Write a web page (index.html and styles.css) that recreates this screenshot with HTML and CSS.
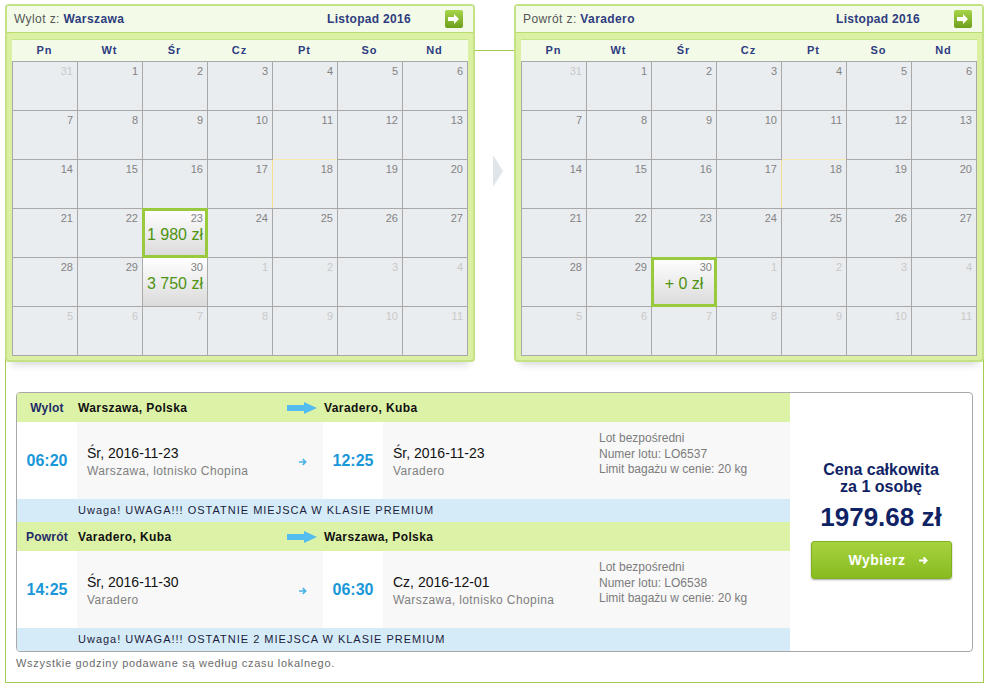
FILE: index.html
```html
<!DOCTYPE html>
<html>
<head>
    <meta charset="utf-8">
    <title>Wybór lotu</title>
    <link rel="stylesheet" href="styles.css">
</head>
<body>
    <div class="page">
        <div class="search">
            <div class="calendars">
                <div class="cal">
                    <div class="cal-head">
                        <div class="cal-title">Wylot z: <b>Warszawa</b></div>
                        <div class="cal-month">Listopad 2016</div>
                        <button class="cal-next"><svg width="12" height="10" viewBox="0 0 12 10"><polygon points="0,3 6,3 6,0 11,5 6,10 6,7 0,7" fill="#fff"/></svg></button>
                    </div>
                    <div class="cal-body">
                        <div class="weekdays">
                            <div>Pn</div><div>Wt</div><div>Śr</div><div>Cz</div><div>Pt</div><div>So</div><div>Nd</div>
                        </div>
                        <div class="days" id="outboundDays"></div>
                    </div>
                </div>

                <div class="cal-sep"><span class="chevron"></span></div>

                <div class="cal">
                    <div class="cal-head">
                        <div class="cal-title">Powrót z: <b>Varadero</b></div>
                        <div class="cal-month">Listopad 2016</div>
                        <button class="cal-next"><svg width="12" height="10" viewBox="0 0 12 10"><polygon points="0,3 6,3 6,0 11,5 6,10 6,7 0,7" fill="#fff"/></svg></button>
                    </div>
                    <div class="cal-body">
                        <div class="weekdays">
                            <div>Pn</div><div>Wt</div><div>Śr</div><div>Cz</div><div>Pt</div><div>So</div><div>Nd</div>
                        </div>
                        <div class="days" id="returnDays"></div>
                    </div>
                </div>
            </div>

            <div class="offer">
                <div class="legs">
                    <!-- outbound -->
                    <div class="leg-label">Wylot</div>
                    <div class="leg-from">
                        <span>Warszawa, Polska</span>
                        <svg class="big-arrow" width="30" height="12" viewBox="0 0 30 12"><polygon points="0,3 17,3 17,0 30,6 17,12 17,9 0,9"/></svg>
                    </div>
                    <div class="leg-to">Varadero, Kuba</div>

                    <div class="time">06:20</div>
                    <div class="where">
                        <div>
                            <div class="date">Śr, 2016-11-23</div>
                            <div class="place">Warszawa, lotnisko Chopina</div>
                        </div>
                        <svg class="small-arrow" width="8" height="8" viewBox="0 0 8 8"><path d="M0 4h6.5M3.8 1.2l2.8 2.8-2.8 2.8"/></svg>
                    </div>
                    <div class="time">12:25</div>
                    <div class="where arrival">
                        <div class="arrival-when">
                            <div class="date">Śr, 2016-11-23</div>
                            <div class="place">Varadero</div>
                        </div>
                        <div class="info">
                            Lot bezpośredni<br>
                            Numer lotu: LO6537<br>
                            Limit bagażu w cenie: 20 kg
                        </div>
                    </div>
                    <div class="notice">Uwaga! UWAGA!!! OSTATNIE MIEJSCA W KLASIE PREMIUM</div>

                    <!-- return -->
                    <div class="leg-label">Powrót</div>
                    <div class="leg-from">
                        <span>Varadero, Kuba</span>
                        <svg class="big-arrow" width="30" height="12" viewBox="0 0 30 12"><polygon points="0,3 17,3 17,0 30,6 17,12 17,9 0,9"/></svg>
                    </div>
                    <div class="leg-to">Warszawa, Polska</div>

                    <div class="time">14:25</div>
                    <div class="where">
                        <div>
                            <div class="date">Śr, 2016-11-30</div>
                            <div class="place">Varadero</div>
                        </div>
                        <svg class="small-arrow" width="8" height="8" viewBox="0 0 8 8"><path d="M0 4h6.5M3.8 1.2l2.8 2.8-2.8 2.8"/></svg>
                    </div>
                    <div class="time">06:30</div>
                    <div class="where arrival">
                        <div class="arrival-when">
                            <div class="date">Cz, 2016-12-01</div>
                            <div class="place">Warszawa, lotnisko Chopina</div>
                        </div>
                        <div class="info">
                            Lot bezpośredni<br>
                            Numer lotu: LO6538<br>
                            Limit bagażu w cenie: 20 kg
                        </div>
                    </div>
                    <div class="notice">Uwaga! UWAGA!!! OSTATNIE 2 MIEJSCA W KLASIE PREMIUM</div>
                </div>

                <div class="total">
                    <div class="total-label">Cena całkowita<br>za 1 osobę</div>
                    <div class="total-price">1979.68 zł</div>
                    <button class="choose-btn">Wybierz <svg width="10" height="9" viewBox="0 0 10 9"><path d="M0 4.5h7.5M4.5 1.3l3.2 3.2-3.2 3.2"/></svg></button>
                </div>
            </div>

            <div class="footnote">Wszystkie godziny podawane są według czasu lokalnego.</div>
        </div>
    </div>

    <script>
        // November 2016 grid: starts on Monday 31 Oct, ends on Sunday 11 Dec
        function buildMonth(id, prices, selected) {
            const days = [31];
            for (let d = 1; d <= 30; d++) days.push(d);
            for (let d = 1; d <= 11; d++) days.push(d);

            document.getElementById(id).innerHTML = days.map((day, i) => {
                const inMonth = i > 0 && i <= 30;
                const price = inMonth ? prices[day] : null;
                let cls = 'day';
                if (!inMonth) cls += ' other';
                if (inMonth && day === 18) cls += ' today';
                if (price) cls += ' has-price';
                if (inMonth && day === selected) cls += ' selected';
                return `<div class="${cls}"><span class="num">${day}</span>${price ? `<span class="price">${price}</span>` : ''}</div>`;
            }).join('');
        }

        buildMonth('outboundDays', { 23: '1 980 zł', 30: '3 750 zł' }, 23);
        buildMonth('returnDays', { 30: '+ 0 zł' }, 30);
    </script>
</body>
</html>
```

FILE: styles.css
```css
body { margin: 0; font-family: "Liberation Sans", Arial, sans-serif; color: #222; background: #fff; }
button { font-family: inherit; cursor: pointer; }

.page { padding: 50px 5px 0; }
.search { border: 1px solid #a3cd4a; padding: 0 10px 12px; }

/* calendars */
.calendars { display: flex; margin: -47px -11px 0; }
.cal { width: 470px; box-sizing: border-box; border: 2px solid #c3e284; border-radius: 4px; background: #dcf0a4; box-shadow: 0 8px 8px -6px rgba(0,0,0,0.18); }
.cal-head { display: flex; align-items: center; height: 26px; padding: 0 10px 0 7px; background: #f3fbe8; border-bottom: 1px solid #b9dc70; font-size: 12px; letter-spacing: 0.4px; }
.cal-title { flex: 1; color: #555; margin-top: -1px; }
.cal-title b { color: #2e3c7e; }
.cal-month { margin-right: 34px; font-weight: bold; color: #2e3c7e; letter-spacing: 0.3px; }
.cal-next { width: 18px; height: 18px; padding: 0; border: none; border-radius: 2px; background: linear-gradient(#a8d64b, #6e9f1c); display: flex; align-items: center; justify-content: center; }
.cal-body { padding: 6px 5px 4px; }
.weekdays { display: grid; grid-template-columns: repeat(7, 65px); height: 21px; border-top: 1px solid #c6e48c; background: #f3fbe8; }
.weekdays div { text-align: center; line-height: 21px; font-size: 11px; font-weight: bold; color: #2e3c80; letter-spacing: 1px; }
.days { display: grid; grid-template-columns: repeat(7, 64px); grid-auto-rows: 48px; gap: 1px; padding: 1px; width: 456px; box-sizing: border-box; background: #a9a9a9; }
.day { background: #eaedf0; position: relative; }
.num { display: block; text-align: right; padding: 3px 4px 0 0; font-size: 11px; line-height: 13px; color: #838383; }
.day.other .num { color: #c9c9c9; }
.day.today { box-shadow: -1px 0 0 #f2e08e, 0 -1px 0 #f5e9b0; }
.day.has-price { background: linear-gradient(#fff, #dadada); }
.day.selected { outline: 3px solid #99c93c; outline-offset: -2px; }
.price { display: block; text-align: center; font-size: 16px; line-height: 19px; color: #4e9312; }

.cal-sep { width: 39px; }
.chevron { display: block; width: 0; height: 0; margin: 151px 0 0 18px; border-top: 16px solid transparent; border-bottom: 16px solid transparent; border-left: 10px solid #e0e5ea; }

/* flight offer */
.offer { display: flex; margin-top: 30px; border: 1px solid #a8a8a8; border-radius: 4px; overflow: hidden; }
.legs { width: 773px; display: grid; grid-template-columns: 60px 246px 60px 1fr; }
.leg-label, .leg-from, .leg-to { height: 29px; display: flex; align-items: center; background: #dcf2a6; font-size: 12px; font-weight: bold; letter-spacing: 0.4px; }
.leg-label { justify-content: center; color: #1f2b68; letter-spacing: 0.2px; }
.leg-from { justify-content: space-between; padding: 0 6px 0 1px; color: #111; }
.leg-to { grid-column: 3 / 5; padding-left: 1px; color: #111; }
.big-arrow { fill: #55bcef; }

.time { height: 77px; display: flex; align-items: center; justify-content: center; background: #fff; font-size: 16px; font-weight: bold; color: #1a97d8; }
.where { display: flex; align-items: center; justify-content: space-between; padding: 2px 16px 0 10px; background: #f8f8f8; }
.date { font-size: 14px; color: #111; }
.place { margin-top: 3px; font-size: 12px; color: #808080; letter-spacing: 0.4px; }
.small-arrow { fill: none; stroke: #4ab3e8; stroke-width: 1.7; }
.arrival { justify-content: flex-start; padding-right: 0; }
.arrival-when { width: 206px; }
.info { align-self: flex-start; padding-top: 7px; font-size: 12px; line-height: 15.5px; color: #7c7c7c; }
.notice { grid-column: 1 / -1; height: 23px; line-height: 23px; padding-left: 61px; background: #d5ebf8; font-size: 11px; color: #1c1c3c; letter-spacing: 1px; }

.total { flex: 1; display: flex; flex-direction: column; align-items: center; justify-content: center; padding-bottom: 4px; }
.total-label { text-align: center; font-size: 16px; line-height: 17px; font-weight: bold; color: #0e2264; }
.total-price { margin-top: 7px; font-size: 26px; line-height: 30px; font-weight: bold; color: #0e2264; }
.choose-btn { margin-top: 9px; width: 141px; height: 38px; padding: 0 0 0 16px; border: 1px solid #82b11f; border-radius: 3px; background: linear-gradient(#a7d33e, #87bb20); box-shadow: 0 1px 2px rgba(0,0,0,0.35); color: #fff; font-size: 14px; font-weight: bold; letter-spacing: 0.5px; display: flex; align-items: center; justify-content: center; }
.choose-btn svg { margin-left: 14px; fill: none; stroke: #fff; stroke-width: 1.8; }

.footnote { margin-top: 4px; font-size: 11px; line-height: 14px; color: #6b6b6b; letter-spacing: 0.7px; }
```
